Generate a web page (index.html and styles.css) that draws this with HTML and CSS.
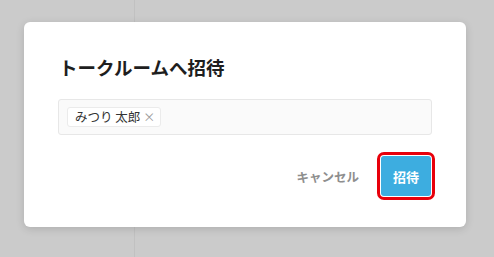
FILE: index.html
```html
<!DOCTYPE html>
<html lang="ja">
<head>
<meta charset="utf-8">
<link rel="stylesheet" href="styles.css">
</head>
<body>
<div class="modal">
  <h2 class="title">トークルームへ招待</h2>
  <div class="field">
    <span class="chip">みつり 太郎<span class="chip-x">×</span></span>
  </div>
  <div class="footer">
    <button class="btn-cancel">キャンセル</button>
    <button class="btn-invite">招待</button>
  </div>
</div>
</body>
</html>
```

FILE: styles.css
```css
html, body {
  margin: 0;
  padding: 0;
}
body {
  width: 494px;
  height: 257px;
  overflow: hidden;
  background: linear-gradient(to right, #cbcbcb 0, #cbcbcb 134px, #c1c1c1 134px, #c1c1c1 135px, #cbcbcb 135px);
  font-family: "Noto Sans CJK JP", "Noto Sans", sans-serif;
  padding-top: 22px;
  box-sizing: border-box;
}
.modal {
  margin-left: 24px;
  width: 442px;
  height: 205px;
  box-sizing: border-box;
  background: #fff;
  border-radius: 6px;
  box-shadow: 0 2px 8px rgba(0, 0, 0, 0.14);
  padding: 32px 34px 31px 34px;
  display: flex;
  flex-direction: column;
}
.title {
  margin: 0 0 19px 1px;
  font-size: 18.5px;
  line-height: 26px;
  font-weight: 700;
  color: #1e1e1e;
}
.field {
  height: 36px;
  box-sizing: border-box;
  border: 1px solid #e7e7e7;
  border-radius: 3px;
  background: #fafafa;
  padding: 0 8px;
  display: flex;
  align-items: center;
}
.chip {
  height: 20px;
  box-sizing: border-box;
  border: 1px solid #ebebeb;
  border-radius: 3px;
  background: #fff;
  padding: 0 5px 0 7px;
  display: inline-flex;
  align-items: center;
  font-size: 12.5px;
  line-height: 18px;
  color: #333;
}
.chip-x {
  margin-left: 3px;
  color: #9a9a9a;
  font-size: 12px;
}
.footer {
  margin-top: 21px;
  display: flex;
  justify-content: flex-end;
  align-items: center;
  padding-right: 1px;
}
.btn-cancel {
  border: 0;
  background: transparent;
  font-family: inherit;
  font-size: 12.5px;
  font-weight: 700;
  color: #8e8e8e;
  padding: 0;
  margin-right: 22px;
  cursor: pointer;
}
.btn-invite {
  width: 50px;
  height: 40px;
  border: 0;
  border-radius: 3px;
  background: #3dade0;
  color: #fff;
  font-family: inherit;
  font-size: 13px;
  font-weight: 700;
  outline: 3px solid #e8000b;
  outline-offset: 1px;
  cursor: pointer;
}
```
